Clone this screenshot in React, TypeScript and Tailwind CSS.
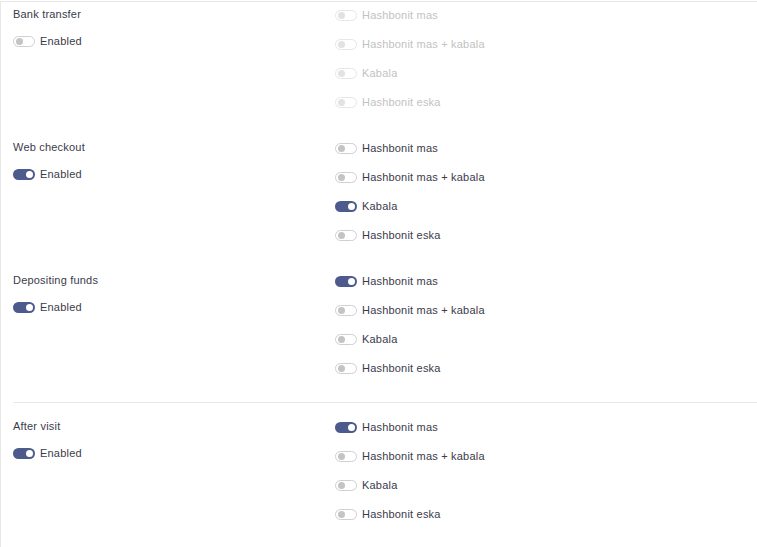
import React from "react";

function Toggle({ on, disabled }: { on: boolean; disabled?: boolean }) {
  if (on) {
    return (
      <span className="relative inline-block w-[22px] h-[11px] rounded-full bg-[#4d5a8c] shrink-0">
        <span className="absolute right-[2px] top-[2px] w-[7px] h-[7px] rounded-full bg-white" />
      </span>
    );
  }
  return (
    <span
      className={
        "relative inline-block w-[22px] h-[11px] rounded-full bg-white border shrink-0 " +
        (disabled ? "border-[#e6e6e6]" : "border-[#cfcfcf]")
      }
    >
      <span
        className={
          "absolute left-[2px] top-[1px] w-[7px] h-[7px] rounded-full " +
          (disabled ? "bg-[#e2e2e2]" : "bg-[#c4c4c4]")
        }
      />
    </span>
  );
}

const names = ["Hashbonit mas", "Hashbonit mas + kabala", "Kabala", "Hashbonit eska"];

function Section({
  title,
  enabled,
  opts,
  className,
}: {
  title: string;
  enabled: boolean;
  opts: boolean[];
  className?: string;
}) {
  const disabled = !enabled;
  return (
    <div className={"flex " + (className || "")}>
      <div className="w-[334px] pl-[12px] shrink-0">
        <div className="h-[27px] flex items-center text-[#3b3b4b]">{title}</div>
        <div className="h-[27px] flex items-center gap-[5px] text-[#3b3b4b]">
          <Toggle on={enabled} />
          <span>Enabled</span>
        </div>
      </div>
      <div className="flex flex-col">
        {opts.map((o, i) => (
          <div key={i} className="h-[29px] flex items-center gap-[5px]">
            <Toggle on={o} disabled={disabled} />
            <span className={disabled ? "text-[#c2c2c2]" : "text-[#3b3b4b]"}>{names[i]}</span>
          </div>
        ))}
      </div>
    </div>
  );
}

export default function App() {
  return (
    <div
      className="w-[757px] h-[547px] bg-white overflow-hidden pt-px"
      style={{ fontFamily: '"Liberation Sans", Arial, sans-serif' }}
    >
      <div className="h-[546px] border-t border-l border-[#e8e8e8] text-[11px] tracking-[0.2px]">
        <Section title="Bank transfer" enabled={false} opts={[false, false, false, false]} className="h-[133px] -mt-[1px]" />
        <Section title="Web checkout" enabled={true} opts={[false, false, true, false]} className="h-[133px]" />
        <Section title="Depositing funds" enabled={true} opts={[true, false, false, false]} className="h-[135px]" />
        <div className="ml-[12px] h-px bg-[#e8e8e8]" />
        <Section title="After visit" enabled={true} opts={[true, false, false, false]} className="pt-[10px]" />
      </div>
    </div>
  );
}
